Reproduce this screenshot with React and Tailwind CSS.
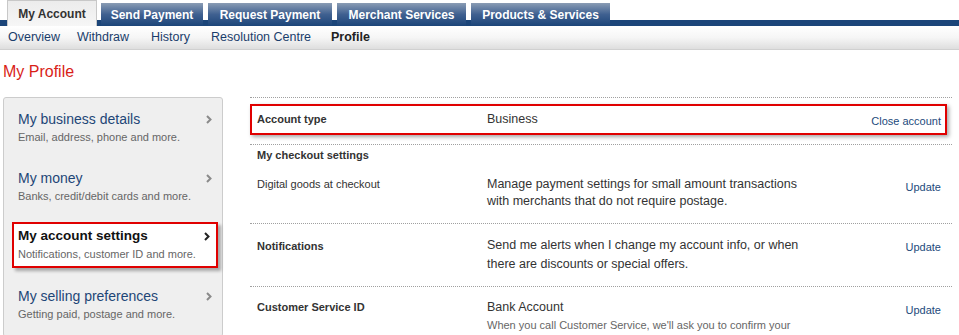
import React from "react";

const font = "font-['Liberation_Sans',Arial,Helvetica,sans-serif]";

const tabs = [
  { label: "Send Payment", w: "w-[102px]" },
  { label: "Request Payment", w: "w-[124px]" },
  { label: "Merchant Services", w: "w-[129px]" },
  { label: "Products & Services", w: "w-[139px]" },
];

const subnav = [
  { label: "Overview", w: "w-[69px]" },
  { label: "Withdraw", w: "w-[74px]" },
  { label: "History", w: "w-[60px]" },
  { label: "Resolution Centre", w: "w-[120px]" },
];

const sideItems = [
  { title: "My business details", sub: "Email, address, phone and more." },
  { title: "My money", sub: "Banks, credit/debit cards and more." },
  { title: "My account settings", sub: "Notifications, customer ID and more.", active: true },
  { title: "My selling preferences", sub: "Getting paid, postage and more." },
];

const Chevron = ({ dark }) => (
  <svg width="6" height="9" viewBox="0 0 6 9" className="mt-[5px] shrink-0">
    <polyline
      points="1,1 4.5,4.5 1,8"
      fill="none"
      stroke={dark ? "#222" : "#8a8a8a"}
      strokeWidth="2"
    />
  </svg>
);

const Row = ({ label, children, action, className = "", labelPad = "pt-[2px]" }) => (
  <div className={`flex items-start pl-[7px] pr-[11px] ${className}`}>
    <div className={`w-[230px] shrink-0 ${labelPad} text-[11px] leading-[17px] font-bold text-[#333]`}>{label}</div>
    <div className="flex-1">{children}</div>
    <a className="pt-[3px] text-[11px] leading-[17px] text-[#1d4a7c]">{action}</a>
  </div>
);

export default function App() {
  return (
    <div className={`${font} w-[959px] h-[335px] overflow-hidden bg-white`}>
      {/* top tabs */}
      <div className="flex items-end gap-[5px] h-[26px] pl-[7px] bg-[linear-gradient(to_bottom,#ffffff_20px,#1b4579_20px)]">
        <div className="w-[90px] h-[26px] -mr-[1px] flex items-center justify-center border border-b-0 border-[#c8c8c8] bg-gradient-to-b from-[#ececec] to-[#f6f6f6] text-[12px] font-bold text-[#333]">
          My Account
        </div>
        {tabs.map((t) => (
          <div
            key={t.label}
            className={`${t.w} h-[23px] flex items-center justify-center pt-[1px] bg-gradient-to-b from-[#8a9cb4] via-[#3f6090] to-[#1b4579] text-[12px] font-bold text-white`}
          >
            {t.label}
          </div>
        ))}
      </div>

      {/* sub navigation */}
      <div className="flex items-center h-[24px] pl-[8px] bg-gradient-to-b from-white via-[#f6f6f6] to-[#dedede] border-b border-[#d0d0d0] text-[12.5px]">
        {subnav.map((s) => (
          <a key={s.label} className={`${s.w} text-[#1a3d6b]`}>{s.label}</a>
        ))}
        <span className="font-bold text-[#222]">Profile</span>
      </div>

      <h1 className="mt-[13px] ml-[3px] text-[16px] leading-[18px] text-[#d91e18]">My Profile</h1>

      <div className="flex items-start mt-[16px]">
        {/* sidebar */}
        <div className="ml-[3px] w-[220px] h-[240px] shrink-0 rounded-[3px] border border-[#cccccc] bg-[#efefef] pt-[6px] pl-[8px] pr-[4px]">
          {sideItems.map((it) => (
            <div
              key={it.title}
              className={`h-[46px] mb-[13px] flex justify-between pr-[6px] ${
                it.active
                  ? "bg-white border-2 border-[#e00000] pl-[4px] pt-[3px] shadow-[3px_3px_3px_rgba(0,0,0,0.3)]"
                  : "pl-[6px] pt-[6px]"
              }`}
            >
              <div>
                <div
                  className={`leading-[18px] ${
                    it.active ? "text-[13.5px] font-bold text-[#111]" : "text-[14px] text-[#1e4677]"
                  }`}
                >
                  {it.title}
                </div>
                <div className="mt-[2px] text-[11px] leading-[14px] text-[#666]">{it.sub}</div>
              </div>
              <Chevron dark={it.active} />
            </div>
          ))}
        </div>

        {/* content */}
        <div className="ml-[27px] w-[702px] border-t border-dotted border-[#a0a0a0]">
          <div className="pt-[6px] pb-[9px] pr-[5px] border-b border-dotted border-[#a0a0a0]">
            <div className="h-[31px] flex items-center border-2 border-[#e00000] bg-white pl-[5px] pr-[4px] shadow-[2px_2px_4px_rgba(0,0,0,0.35)]">
              <div className="w-[230px] shrink-0 text-[11px] font-bold text-[#333]">Account type</div>
              <div className="flex-1 text-[12.5px] text-[#333]">Business</div>
              <a className="pt-[3px] text-[11px] text-[#1d4a7c]">Close account</a>
            </div>
          </div>

          <div className="pl-[7px] pt-[3px] text-[11px] leading-[14px] font-bold text-[#333]">My checkout settings</div>

          <Row
            className="pt-[14px] pb-[13px] border-b border-dotted border-[#a0a0a0]"
            label={<span className="font-normal">Digital goods at checkout</span>}
            labelPad="pt-0"
            action="Update"
          >
            <p className="text-[12.5px] leading-[17px] text-[#333]">
              Manage payment settings for small amount transactions
              <br />
              with merchants that do not require postage.
            </p>
          </Row>

          <Row className="pt-[12px] pb-[12px] border-b border-dotted border-[#a0a0a0]" label="Notifications" action="Update">
            <p className="text-[12.5px] leading-[19px] text-[#333]">
              Send me alerts when I change my account info, or when
              <br />
              there are discounts or special offers.
            </p>
          </Row>

          <Row className="pt-[12px]" label="Customer Service ID" labelPad="pt-0" action="Update">
            <p className="text-[12.5px] leading-[17px] text-[#333]">Bank Account</p>
            <p className="text-[11px] leading-[18px] text-[#666]">
              When you call Customer Service, we'll ask you to confirm your
            </p>
          </Row>
        </div>
      </div>
    </div>
  );
}
